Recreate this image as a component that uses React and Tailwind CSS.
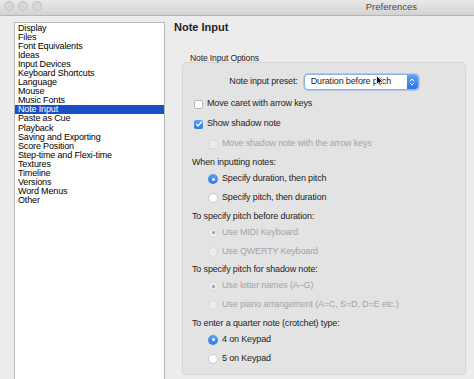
import React from 'react';

const sections = [
    'Display', 'Files', 'Font Equivalents', 'Ideas', 'Input Devices', 'Keyboard Shortcuts',
    'Language', 'Mouse', 'Music Fonts', 'Note Input', 'Paste as Cue', 'Playback',
    'Saving and Exporting', 'Score Position', 'Step-time and Flexi-time', 'Textures',
    'Timeline', 'Versions', 'Word Menus', 'Other',
];

const Checkbox = ({ checked, disabled }) => {
    if (checked) {
        return (
            <span className="flex h-[9px] w-[9px] items-center justify-center rounded-[2px] bg-gradient-to-b from-[#5aa0f7] to-[#2f7ae8]">
                <svg width="8" height="8" viewBox="0 0 8 8">
                    <path d="M1.5 4.2 L3.2 5.9 L6.6 1.8" fill="none" stroke="#fff" strokeWidth="1.4" strokeLinecap="round" strokeLinejoin="round" />
                </svg>
            </span>
        );
    }
    return (
        <span
            className={
                disabled
                    ? 'h-[9px] w-[9px] rounded-[2px] border border-[#d9d9d9] bg-[#ececec]'
                    : 'h-[9px] w-[9px] rounded-[2px] border border-[#b8b8b8] bg-white'
            }
        />
    );
};

const Radio = ({ checked, disabled }) => {
    if (disabled) {
        return (
            <span className="flex h-[10px] w-[10px] items-center justify-center rounded-full border border-[#dadada] bg-[#ececec]">
                {checked && <span className="h-[3px] w-[3px] rounded-full bg-[#9a9a9a]" />}
            </span>
        );
    }
    if (checked) {
        return (
            <span className="flex h-[10px] w-[10px] items-center justify-center rounded-full bg-gradient-to-b from-[#5aa0f7] to-[#2f7ae8]">
                <span className="h-[3px] w-[3px] rounded-full bg-white" />
            </span>
        );
    }
    return <span className="h-[10px] w-[10px] rounded-full border border-[#c9c9c9] bg-white" />;
};

const CheckRow = ({ label, checked, disabled, indent }) => (
    <div className={`flex h-[20px] items-center gap-[4px] ${indent ? 'pl-[26px]' : 'pl-[11px]'}`}>
        <Checkbox checked={checked} disabled={disabled} />
        <span className={disabled ? 'text-[#a3a3a3]' : ''}>{label}</span>
    </div>
);

const GroupLabel = ({ children }) => (
    <div className="mt-[2.5px] flex h-[13px] items-center pl-[9px]">{children}</div>
);

const RadioRow = ({ label, checked, disabled }) => (
    <div className="flex h-[19px] items-center gap-[4px] pl-[25px]">
        <Radio checked={checked} disabled={disabled} />
        <span className={disabled ? 'text-[#a3a3a3]' : ''}>{label}</span>
    </div>
);

const App = () => {
    return (
        <div className="h-[379px] w-[474px] overflow-hidden bg-[#ececec] font-['Liberation_Sans',Arial,sans-serif] text-[9px] tracking-[-0.15px] text-[#1e1e1e]">
            {/* title bar */}
            <div className="flex h-[16px] items-center justify-between border-b border-[#b5b5b5] bg-gradient-to-b from-[#e8e8e8] to-[#d3d3d3] pl-[4px] pr-[57px]">
                <div className="-mt-[4px] flex gap-[4px]">
                    <span className="h-[10px] w-[10px] rounded-full border border-[#c2c2c2] bg-[#d6d6d6]" />
                    <span className="h-[10px] w-[10px] rounded-full border border-[#c2c2c2] bg-[#d6d6d6]" />
                    <span className="h-[10px] w-[10px] rounded-full border border-[#c2c2c2] bg-[#d6d6d6]" />
                </div>
                <span className="-mt-[1px] text-[9.5px] tracking-normal text-[#4a4a4a]">Preferences</span>
            </div>

            <div className="flex">
                {/* sections list */}
                <div className="ml-[14px] mt-[6px] h-[360px] w-[151px] shrink-0 border border-[#b9b9b9] bg-white pt-[0.5px]">
                    {sections.map((s) => (
                        <div
                            key={s}
                            className={
                                s === 'Note Input'
                                    ? 'h-[9.1px] bg-[#1b4fc4] pl-[3px] leading-[9.1px] text-white'
                                    : 'h-[9.1px] pl-[3px] leading-[9.1px] text-black'
                            }
                        >
                            {s}
                        </div>
                    ))}
                </div>

                {/* page */}
                <div className="pl-[9px]">
                    <div className="mt-[5px] h-[12px] text-[11px] font-bold leading-[12px] tracking-normal">Note Input</div>
                    <div className="ml-[16px] mt-[20px] h-[10px] text-[8.6px] leading-[10px]">Note Input Options</div>

                    <div className="-mt-[1px] ml-[8px] w-[284px] rounded-[4px] border border-[#d6d6d6] bg-[#e3e3e3] pb-[6px] pt-[9px]">
                        <div className="flex h-[20px] items-center justify-center gap-[6px]">
                            <span>Note input preset:</span>
                            <div className="relative flex h-[16px] w-[115px] items-center rounded-[4px] border border-[#8bb0ef] bg-white shadow-[0_0_0_1px_rgba(120,165,240,0.45)]">
                                <span className="flex-1 pl-[6px]">Duration before pitch</span>
                                <span className="flex h-full w-[11px] items-center justify-center rounded-r-[3px] bg-gradient-to-b from-[#5fa3f6] to-[#2c72e6]">
                                    <svg width="6" height="10" viewBox="0 0 6 10">
                                        <path d="M1.2 4 L3 2 L4.8 4 M1.2 6 L3 8 L4.8 6" fill="none" stroke="#fff" strokeWidth="1" strokeLinecap="round" strokeLinejoin="round" />
                                    </svg>
                                </span>
                                {/* mouse pointer */}
                                <svg className="absolute left-[71px] top-[0px]" width="8" height="12" viewBox="0 0 8 12">
                                    <path d="M0.5 0.5 L0.5 9.5 L2.6 7.6 L4 11 L5.4 10.4 L4 7.1 L7 7.1 Z" fill="#111" stroke="#fff" strokeWidth="0.8" strokeLinejoin="round" />
                                </svg>
                            </div>
                        </div>

                        <div className="mt-[2px]">
                            <CheckRow label="Move caret with arrow keys" />
                            <CheckRow label="Show shadow note" checked />
                            <CheckRow label="Move shadow note with the arrow keys" disabled indent />
                        </div>

                        <div className="mt-[0.5px]">
                            <GroupLabel>When inputting notes:</GroupLabel>
                            <RadioRow label="Specify duration, then pitch" checked />
                            <RadioRow label="Specify pitch, then duration" />

                            <GroupLabel>To specify pitch before duration:</GroupLabel>
                            <RadioRow label="Use MIDI Keyboard" checked disabled />
                            <RadioRow label="Use QWERTY Keyboard" disabled />

                            <GroupLabel>To specify pitch for shadow note:</GroupLabel>
                            <RadioRow label="Use letter names (A–G)" checked disabled />
                            <RadioRow label="Use piano arrangement (A=C, S=D, D=E etc.)" disabled />

                            <GroupLabel>To enter a quarter note (crotchet) type:</GroupLabel>
                            <RadioRow label="4 on Keypad" checked />
                            <RadioRow label="5 on Keypad" />
                        </div>
                    </div>
                </div>
            </div>
        </div>
    );
};

export default App;
